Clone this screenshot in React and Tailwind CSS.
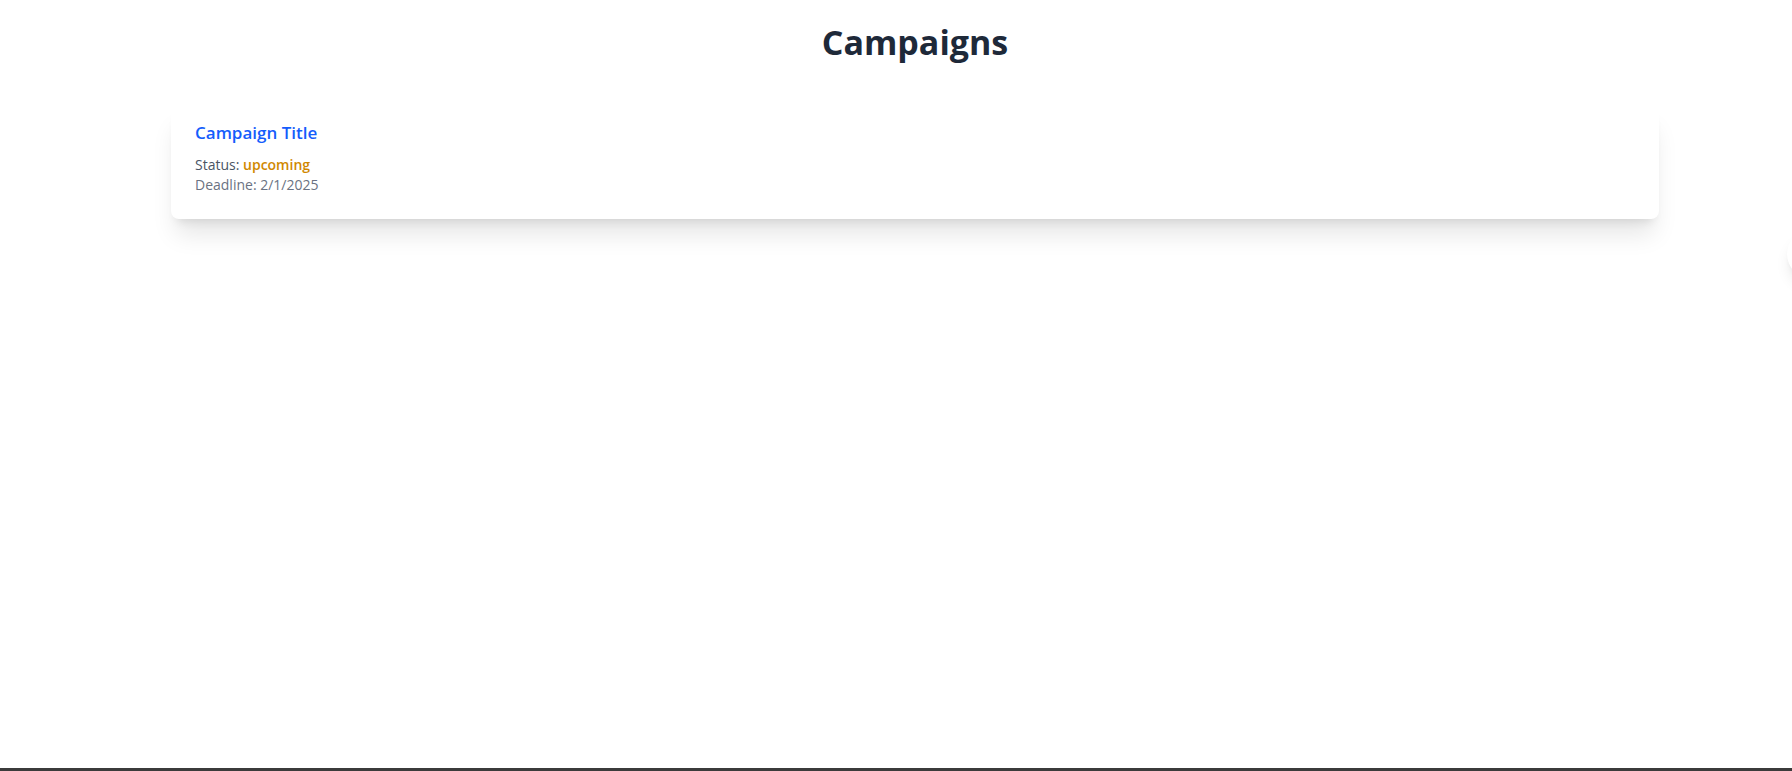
import React from 'react';

const campaigns = [
  { id: 1, title: 'Campaign Title', status: 'upcoming', deadline: '2/1/2025' },
];

const CampaignCard = ({ campaign }) => (
  <div className="bg-white rounded-lg shadow-xl px-6 pt-[14px] pb-6">
    <h2 className="text-[17px] leading-7 font-semibold text-blue-600 mb-2">{campaign.title}</h2>
    <p className="text-sm text-gray-600">
      Status: <span className="font-semibold text-yellow-600">{campaign.status}</span>
    </p>
    <p className="text-sm text-gray-500">Deadline: {campaign.deadline}</p>
  </div>
);

export default function App() {
  return (
    <div
      className="relative min-h-screen bg-white overflow-hidden"
      style={{ fontFamily: '"Open Sans", "Noto Sans", sans-serif' }}
    >
      <div className="ml-[171px] mr-[133px] pt-[22px]">
        <h1 className="text-[34px] leading-10 font-bold text-gray-800 text-center mb-[43px]">Campaigns</h1>
        <div className="flex flex-col gap-4">
          {campaigns.map((c) => (
            <CampaignCard key={c.id} campaign={c} />
          ))}
        </div>
      </div>

      {/* floating button mostly off-screen */}
      <div className="absolute left-[1787px] top-[230px] w-12 h-12 rounded-full bg-white shadow-lg" />

      <div className="absolute bottom-0 left-0 right-0 h-[3px] bg-[#3b3b3b]" />
    </div>
  );
}
